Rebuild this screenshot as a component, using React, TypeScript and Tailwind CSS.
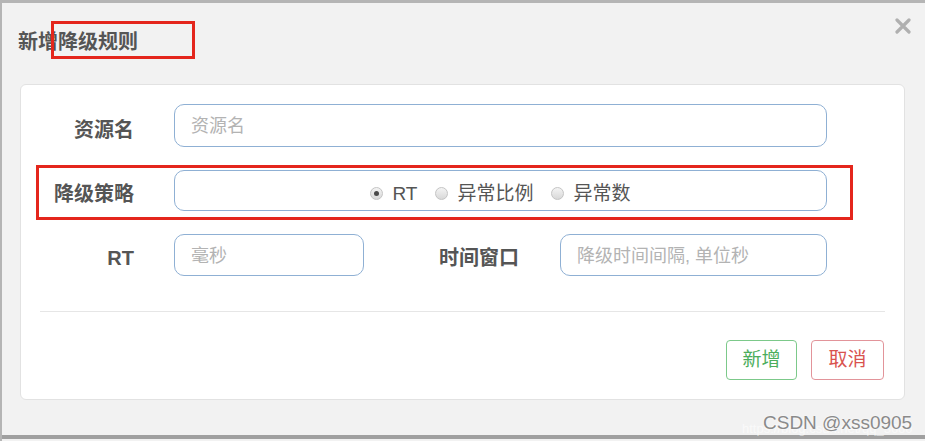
import React from "react";

const font = "font-['Liberation_Sans','Noto_Sans_CJK_SC',sans-serif]";

function Radio({ label, checked }: { label: string; checked?: boolean }) {
  return (
    <label className="flex items-center gap-[9px]">
      <span className="w-[13px] h-[13px] rounded-full border border-[#c4c4c4] bg-gradient-to-b from-[#f4f4f4] to-[#d8d8d8] flex items-center justify-center">
        {checked && <span className="w-[5px] h-[5px] rounded-full bg-[#4a4a4a]" />}
      </span>
      <span className="text-[19px] leading-none text-[#555]">{label}</span>
    </label>
  );
}

function Field({ placeholder, width }: { placeholder: string; width: string }) {
  return (
    <input
      placeholder={placeholder}
      className={`${width} h-full rounded-[10px] border-[1.5px] border-[#8fb0d4] bg-white pl-[16px] pt-[2px] text-[18px] outline-none placeholder:text-[#b3b3b3]`}
    />
  );
}

export default function App() {
  return (
    <div className={`relative w-[925px] h-[441px] overflow-hidden bg-[#f2f2f2] border-t-[3px] border-l-[2px] border-[#b5b5b5] ${font}`}>
      {/* header */}
      <div className="h-[81px] flex items-start justify-between pl-[16px] pr-[14px]">
        <h2 className="mt-[27px] text-[20px] leading-[24px] font-semibold text-[#555]">新增降级规则</h2>
        <svg className="mt-[15px]" width="16" height="16" viewBox="0 0 16 16">
          <path d="M2 2L14 14M14 2L2 14" stroke="#b0b0b0" strokeWidth="3.2" strokeLinecap="round" />
        </svg>
      </div>

      {/* panel */}
      <div className="ml-[18px] w-[885px] h-[316px] bg-white rounded-[6px] border border-[#e2e2e2] pt-[19px]">
        <div className="flex items-center h-[43px]">
          <span className="w-[113px] pt-[8px] text-right text-[20px] font-bold text-[#555]">资源名</span>
          <div className="ml-[40px] h-full flex">
            <Field placeholder="资源名" width="w-[653px]" />
          </div>
        </div>

        <div className="mt-[23px] flex items-center h-[41px]">
          <span className="w-[113px] pt-[6px] text-right text-[20px] font-bold text-[#555]">降级策略</span>
          <div className="ml-[40px] h-full w-[653px] rounded-[10px] border-[1.5px] border-[#8fb0d4] flex items-center justify-center gap-[18px] pt-[5px]">
            <Radio label="RT" checked />
            <Radio label="异常比例" />
            <Radio label="异常数" />
          </div>
        </div>

        <div className="mt-[23px] flex items-center h-[42px]">
          <span className="w-[113px] pt-[5px] text-right text-[20px] font-bold text-[#555]">RT</span>
          <div className="ml-[40px] h-full flex">
            <Field placeholder="毫秒" width="w-[190px]" />
          </div>
          <span className="w-[155px] pt-[5px] text-right text-[20px] font-bold text-[#555]">时间窗口</span>
          <div className="ml-[41px] h-full flex">
            <Field placeholder="降级时间间隔, 单位秒" width="w-[267px]" />
          </div>
        </div>

        <div className="mt-[35px] mx-[19px] h-px bg-[#e6e6e6]" />

        <div className="mt-[28px] flex justify-end gap-[14px] pr-[20px]">
          <button className="w-[71px] h-[40px] rounded-[4px] border-[1.5px] border-[#7cc98a] text-[19px] text-[#4cae5c]">新增</button>
          <button className="w-[73px] h-[40px] rounded-[4px] border-[1.5px] border-[#e2949a] text-[19px] text-[#d9534f]">取消</button>
        </div>
      </div>

      <div className="mt-[35px] h-[4px] bg-[#a0a0a0]" />

      {/* annotation boxes */}
      <div className="absolute left-[49px] top-[18px] w-[144px] h-[38px] border-[3px] border-[#e4261c]" />
      <div className="absolute left-[34px] top-[162px] w-[817px] h-[55px] border-[3px] border-[#e4261c]" />

      {/* watermark */}
      <div className="absolute left-[740px] top-[419px] text-[13px] leading-[14px] text-white/60 whitespace-nowrap">https://blog.csdn.net/qq_3660</div>
      <div className="absolute left-[761px] top-[409px] text-[19px] leading-[22px] text-[#8a8a8a] whitespace-nowrap [text-shadow:0_0_2px_#fff]">CSDN @xss0905</div>
    </div>
  );
}
